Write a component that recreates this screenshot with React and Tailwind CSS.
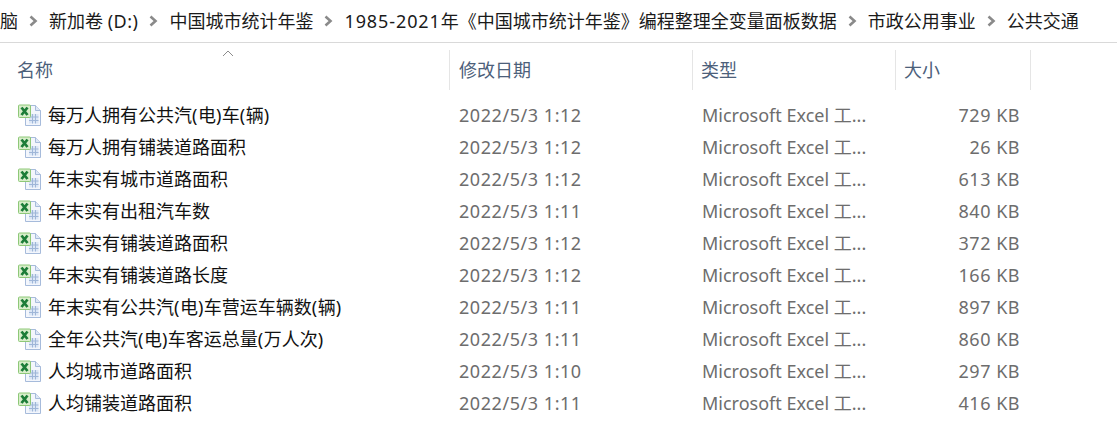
import React from 'react';

const font = { fontFamily: '"Noto Sans", "Noto Sans CJK SC", sans-serif' };

const files = [
  ['每万人拥有公共汽(电)车(辆)', '2022/5/3 1:12', '729 KB'],
  ['每万人拥有铺装道路面积', '2022/5/3 1:12', '26 KB'],
  ['年末实有城市道路面积', '2022/5/3 1:12', '613 KB'],
  ['年末实有出租汽车数', '2022/5/3 1:11', '840 KB'],
  ['年末实有铺装道路面积', '2022/5/3 1:12', '372 KB'],
  ['年末实有铺装道路长度', '2022/5/3 1:12', '166 KB'],
  ['年末实有公共汽(电)车营运车辆数(辆)', '2022/5/3 1:11', '897 KB'],
  ['全年公共汽(电)车客运总量(万人次)', '2022/5/3 1:11', '860 KB'],
  ['人均城市道路面积', '2022/5/3 1:10', '297 KB'],
  ['人均铺装道路面积', '2022/5/3 1:11', '416 KB'],
];

function Chevron() {
  return (
    <svg width="9" height="12" viewBox="0 0 9 12" className="mx-[11px] shrink-0">
      <path d="M1.5 1.5 L6.5 6 L1.5 10.5" fill="none" stroke="#8a8a8a" strokeWidth="2.6" />
    </svg>
  );
}

function ExcelIcon() {
  return (
    <svg width="24" height="23" viewBox="0 0 24 23" className="shrink-0">
      <path d="M7.5 1.5 H17.5 L22.5 6.5 V21.5 H7.5 Z" fill="#f3f6fc" stroke="#a6bbdb" />
      <path d="M17.5 1.5 V6.5 H22.5" fill="#dfe8f6" stroke="#a6bbdb" />
      <rect x="11" y="10" width="9.5" height="9.5" fill="#dbe6f5" />
      <path d="M11 13 H20.5 M11 16.5 H20.5 M14.5 10 V19.5 M17.5 10 V19.5" stroke="#9fb6d8" strokeWidth="1" />
      <rect x="0.5" y="1" width="12" height="12.5" rx="1" fill="#d9eecb" stroke="#8ec878" />
      <path d="M3.5 3.5 L9.5 11 M9.5 3.5 L3.5 11" stroke="#1d7d38" strokeWidth="2.8" />
    </svg>
  );
}

function HeaderCell({ label, className }) {
  return (
    <div className={`flex h-10 items-center border-r border-[#e5e5e5] pt-[1px] text-[18px] text-[#4c607a] ${className}`}>
      {label}
    </div>
  );
}

// parens are a little wider in the reference font
function FileName({ text }) {
  return (
    <span>
      {text.split(/([()])/).map((part, i) =>
        part === '(' || part === ')' ? (
          <span key={i} className="tracking-[0.5px]">{part}</span>
        ) : (
          part
        ),
      )}
    </span>
  );
}

export default function App() {
  return (
    <div className="h-[438px] w-[1117px] overflow-hidden bg-white" style={font}>
      {/* Address bar */}
      <div className="flex h-[43px] items-center overflow-hidden whitespace-nowrap border-b border-[#d9d9d9] text-[18px] text-[#1a1a1a]">
        <span>脑</span>
        <Chevron />
        <span>新加卷 <span className="tracking-[0.5px]">(D:)</span></span>
        <Chevron />
        <span>中国城市统计年鉴</span>
        <Chevron />
        <span><span className="tracking-[0.9px]">1985-2021</span>年《中国城市统计年鉴》编程整理全变量面板数据</span>
        <Chevron />
        <span>市政公用事业</span>
        <Chevron />
        <span>公共交通</span>
      </div>

      {/* Column headers */}
      <div className="relative mt-[7px] flex">
        <svg width="12" height="7" viewBox="0 0 12 7" className="absolute left-[222px] top-0">
          <path d="M1 6 L6 1 L11 6" fill="none" stroke="#8c8c8c" />
        </svg>
        <HeaderCell label="名称" className="w-[450px] pl-[17px]" />
        <HeaderCell label="修改日期" className="w-[243px] pl-[9px]" />
        <HeaderCell label="类型" className="w-[203px] pl-[8px]" />
        <HeaderCell label="大小" className="w-[135px] pl-[8px]" />
      </div>

      {/* Rows */}
      <div className="mt-[9px] flex flex-col">
        {files.map(([name, date, size]) => (
          <div key={name} className="flex h-8 items-center whitespace-nowrap text-[18px]">
            <div className="flex w-[450px] items-center gap-[6px] pl-[18px] text-[#111]">
              <ExcelIcon />
              <FileName text={name} />
            </div>
            <div className="w-[243px] pl-[9px] tracking-[0.55px] text-[#6d6d6d]">{date}</div>
            <div className="w-[203px] pl-[9px] text-[#6d6d6d]">Microsoft Excel 工...</div>
            <div className="w-[124px] text-right tracking-[0.5px] text-[#6d6d6d]">{size}</div>
          </div>
        ))}
      </div>
    </div>
  );
}
